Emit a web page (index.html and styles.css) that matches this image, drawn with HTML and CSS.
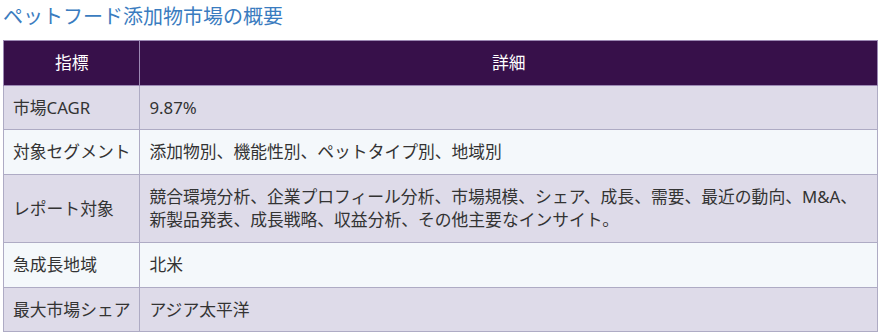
FILE: index.html
```html
<!DOCTYPE html>
<html lang="ja">
<head>
<meta charset="utf-8">
<title>ペットフード添加物市場の概要</title>
<link rel="stylesheet" href="styles.css">
</head>
<body>
<div class="wrap">
  <h2 class="title">ペットフード添加物市場の概要</h2>
  <table class="summary">
    <thead>
      <tr><th class="c1">指標</th><th>詳細</th></tr>
    </thead>
    <tbody>
      <tr class="odd"><td class="c1">市場CAGR</td><td>9.87%</td></tr>
      <tr class="even"><td class="c1">対象セグメント</td><td>添加物別、機能性別、ペットタイプ別、地域別</td></tr>
      <tr class="odd"><td class="c1">レポート対象</td><td>競合環境分析、企業プロフィール分析、市場規模、シェア、成長、需要、最近の動向、M&amp;A、新製品発表、成長戦略、収益分析、その他主要なインサイト。</td></tr>
      <tr class="even"><td class="c1">急成長地域</td><td>北米</td></tr>
      <tr class="odd"><td class="c1">最大市場シェア</td><td>アジア太平洋</td></tr>
    </tbody>
  </table>
</div>
</body>
</html>
```

FILE: styles.css
```css
html, body {
  margin: 0;
  padding: 0;
  background: #ffffff;
}
body {
  font-family: "Noto Sans", "Noto Sans CJK JP", sans-serif;
  color: #333333;
}
.wrap {
  padding: 0 3px;
}
.title {
  margin: 0;
  padding-top: 4px;
  height: 36px;
  font-size: 20px;
  font-weight: normal;
  line-height: 26px;
  color: #3a7cc0;
}
.summary {
  width: 875px;
  border-collapse: collapse;
  font-size: 16.8px;
  line-height: 23.6px;
}
.summary th,
.summary td {
  border: 1px solid #aeabc4;
  padding: 10px 9px;
  text-align: left;
  vertical-align: middle;
}
.summary th {
  background: #37104a;
  color: #ffffff;
  font-weight: normal;
  text-align: center;
  border-color: #9c89b4;
}
.summary .c1 {
  width: 117px;
  white-space: nowrap;
}
.summary .odd td {
  background: #dedbe9;
}
.summary .even td {
  background: #f4f8fb;
}
```
